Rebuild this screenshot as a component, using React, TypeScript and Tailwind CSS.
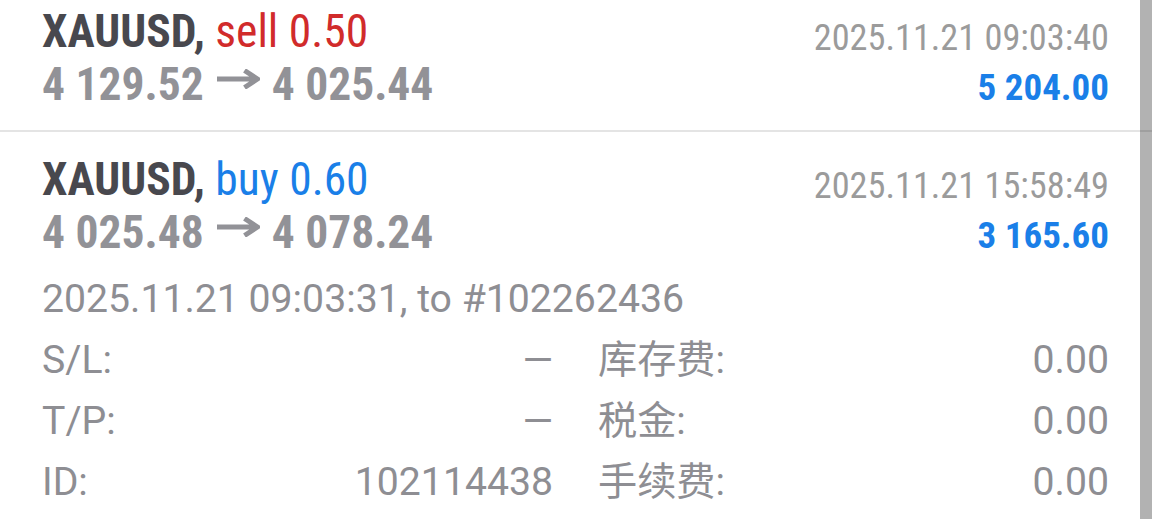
function Arrow() {
  return (
    <svg
      width="43"
      height="20"
      viewBox="0 0 43 20"
      className="inline-block ml-[13px] mr-[12px] align-[11px]"
    >
      <path d="M0 10 H40 M27.5 1.5 L40.5 10 L27.5 18.5" fill="none" stroke="#929297" strokeWidth="5" strokeLinejoin="miter" />
    </svg>
  );
}

function Trade({
  side,
  sideColor,
  volume,
  from,
  to,
  time,
  profit,
  top,
}: {
  side: string;
  sideColor: string;
  volume: string;
  from: string;
  to: string;
  time: string;
  profit: string;
  top: string;
}) {
  return (
    <div className={`${top} font-['Roboto_Condensed',Roboto,sans-serif]`}>
      <div className="flex items-start justify-between h-[53px]">
        <div className="text-[45.5px] leading-[53px] whitespace-nowrap">
          <span className="font-bold text-[#48484e]">XAUUSD,</span>{" "}
          <span className={sideColor}>
            {side} {volume}
          </span>
        </div>
        <div className="pt-[6px] text-[36.3px] leading-[53px] text-[#9b9b9b] whitespace-nowrap">{time}</div>
      </div>
      <div className="flex items-baseline justify-between h-[53px]">
        <div className="text-[45.5px] leading-[53px] font-bold text-[#929297] whitespace-nowrap">
          {from}
          <Arrow />
          {to}
        </div>
        <div className="text-[37px] leading-[53px] font-bold text-[#1a7fe8] whitespace-nowrap">{profit}</div>
      </div>
    </div>
  );
}

function Field({ label, value }: { label: string; value: string }) {
  return (
    <div className="flex justify-between h-[61px] leading-[61px]">
      <span>{label}</span>
      <span>{value}</span>
    </div>
  );
}

export default function App() {
  return (
    <div className="relative w-[1152px] h-[519px] overflow-hidden bg-white">
      <div className="pl-[42px] pr-[43px] pb-[19px]">
        <Trade
          top="pt-[5px]"
          side="sell"
          sideColor="text-[#d12b2b]"
          volume="0.50"
          from="4 129.52"
          to="4 025.44"
          time="2025.11.21 09:03:40"
          profit="5 204.00"
        />
      </div>
      <div className="h-[2px] bg-[#e4e4e4]" />
      <div className="pl-[42px] pr-[43px]">
        <Trade
          top="pt-[21px]"
          side="buy"
          sideColor="text-[#1a7fe8]"
          volume="0.60"
          from="4 025.48"
          to="4 078.24"
          time="2025.11.21 15:58:49"
          profit="3 165.60"
        />
        <div className="mt-[10px] font-['Roboto','Noto_Sans_CJK_SC',sans-serif] text-[39.2px] text-[#8e8e93]">
          <div className="h-[61px] leading-[61px] whitespace-nowrap">2025.11.21 09:03:31, to #102262436</div>
          <div className="grid grid-cols-2 gap-x-[45px]">
            <div>
              <Field label="S/L:" value="—" />
              <Field label="T/P:" value="—" />
              <Field label="ID:" value="102114438" />
            </div>
            <div>
              <Field label="库存费:" value="0.00" />
              <Field label="税金:" value="0.00" />
              <Field label="手续费:" value="0.00" />
            </div>
          </div>
        </div>
      </div>
      <div className="absolute right-0 top-0 h-full w-[12px] bg-black/30" />
    </div>
  );
}
